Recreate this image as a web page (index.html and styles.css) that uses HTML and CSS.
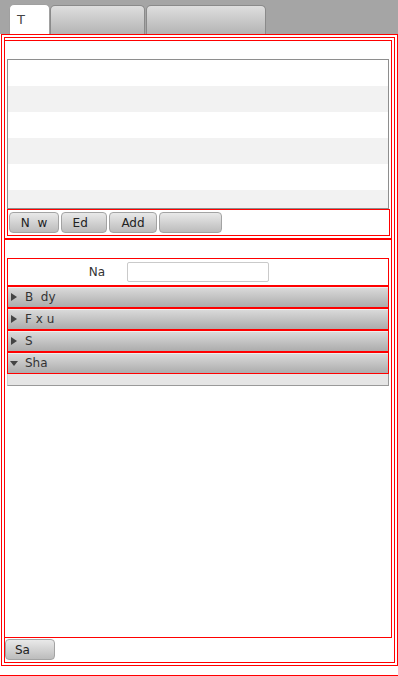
FILE: index.html
```html
<!DOCTYPE html>
<html lang="en">
<head>
  <meta charset="UTF-8">
  <meta name="viewport" content="width=device-width, initial-scale=1.0">
  <title>Editor</title>
  <link rel="stylesheet" href="styles.css">
</head>
<body>
  <div class="tab-bar">
    <div class="tab tab-active">T</div>
    <div class="tab tab-2"></div>
    <div class="tab tab-3"></div>
  </div>

  <div class="frame">
    <div class="frame-inner">
      <div class="split">
        <div class="pane-top">
          <div class="list">
            <div class="row"></div>
            <div class="row"></div>
            <div class="row"></div>
            <div class="row"></div>
            <div class="row"></div>
            <div class="row"></div>
          </div>
          <div class="button-row">
            <button class="btn btn-new">N&nbsp;&nbsp;w</button>
            <button class="btn btn-edit">Ed&nbsp;&nbsp;</button>
            <button class="btn btn-add">Add</button>
            <button class="btn btn-blank"></button>
          </div>
        </div>

        <div class="divider"></div>

        <div class="pane-bottom">
          <div class="name-row">
            <label class="name-label" for="name">Na</label>
            <input class="name-input" id="name" type="text">
          </div>
          <div class="titled"><span class="arrow"></span><span class="titled-text">B&nbsp;&nbsp;dy</span></div>
          <div class="titled"><span class="arrow"></span><span class="titled-text">F x u</span></div>
          <div class="titled"><span class="arrow"></span><span class="titled-text">S</span></div>
          <div class="titled titled-open"><span class="arrow arrow-down"></span><span class="titled-text">Sha</span></div>
          <div class="titled-body"></div>
        </div>
      </div>

      <div class="save-row">
        <button class="btn btn-save">Sa&nbsp;&nbsp;&nbsp;&nbsp;</button>
      </div>
    </div>
  </div>

  <div class="status-line"></div>
</body>
</html>
```

FILE: styles.css
```css
html, body {
  margin: 0;
  padding: 0;
}
body {
  width: 398px;
  background: #fff;
  font-family: "DejaVu Sans", sans-serif;
  font-size: 12px;
  color: #333;
}
* { box-sizing: border-box; }

/* tabs */
.tab-bar {
  height: 34px;
  background: #a5a5a5;
  display: flex;
  align-items: flex-end;
  padding-left: 9px;
}
.tab {
  height: 29px;
  border: 1px solid #8a8a8a;
  border-bottom: none;
  border-radius: 5px 5px 0 0;
  background: linear-gradient(#dedede, #b4b4b4);
}
.tab-active {
  width: 41px;
  height: 30px;
  background: #fff;
  border-color: #a0a0a0;
  padding: 8px 0 0 7px;
  line-height: 14px;
  font-size: 13px;
  color: #444;
}
.tab-2 { width: 95px; }
.tab-3 { width: 120px; margin-left: 1px; }

/* nested frames */
.frame {
  margin-left: 1px;
  width: 397px;
  height: 632px;
  border: 1px solid #f00;
  padding: 2px;
  display: flex;
  flex-direction: column;
}
.frame-inner {
  flex: 1;
  border: 1px solid #f00;
  display: flex;
  flex-direction: column;
}
.split {
  height: 598px;
  margin: 2px 2px 0 0;
  border: 1px solid #f00;
  border-left: none;
  display: flex;
  flex-direction: column;
}

/* top pane */
.pane-top { padding-top: 18px; }
.list {
  margin-left: 2px;
  width: 382px;
  height: 150px;
  border: 1px solid #8e8e8e;
  overflow: hidden;
}
.row { height: 26px; background: #fff; }
.row:nth-child(even) { background: #f2f2f2; }
.button-row {
  margin-left: 2px;
  width: 383px;
  height: 27px;
  border: 1px solid #f00;
  display: flex;
  align-items: center;
  gap: 2px;
  padding-left: 1px;
}
.btn {
  height: 21px;
  padding: 0;
  border: 1px solid #a3a3a3;
  border-radius: 4px;
  background: linear-gradient(#e9e9e9, #bcbcbc);
  font-family: "DejaVu Sans", sans-serif;
  font-size: 12px;
  color: #222;
  white-space: pre;
}
.btn-new { width: 50px; }
.btn-edit { width: 46px; }
.btn-add { width: 48px; }
.btn-blank { width: 63px; }

.divider {
  margin-top: 2px;
  height: 2px;
  background: #f00;
}

/* bottom pane */
.pane-bottom { padding-top: 18px; }
.name-row {
  margin-left: 2px;
  width: 382px;
  height: 28px;
  border: 1px solid #f00;
  display: flex;
  align-items: center;
}
.name-label {
  width: 97px;
  text-align: right;
  color: #333;
}
.name-input {
  margin-left: 22px;
  width: 142px;
  height: 20px;
  padding: 0;
  border: 1px solid #cacaca;
  border-radius: 2px;
  background: #fff;
}
.titled {
  margin-left: 2px;
  width: 382px;
  height: 22px;
  border: 1px solid #f00;
  background: linear-gradient(#dcdcdc, #acacac);
  box-shadow: inset 0 1px 0 #ededed;
  display: flex;
  align-items: center;
  color: #333;
}
.arrow {
  margin-left: 3px;
  width: 0;
  height: 0;
  border-left: 6px solid #444;
  border-top: 4px solid transparent;
  border-bottom: 4px solid transparent;
}
.arrow-down {
  margin-left: 2px;
  border-left: 4px solid transparent;
  border-right: 4px solid transparent;
  border-top: 5px solid #444;
  border-bottom: none;
}
.titled-text {
  margin-left: 8px;
  white-space: pre;
}
.titled-open .titled-text { margin-left: 7px; }
.titled-body {
  margin-left: 2px;
  width: 382px;
  height: 12px;
  background: #e5e5e5;
  border-left: 1px solid #cfcfcf;
  border-right: 1px solid #999;
  border-bottom: 1px solid #999;
}

.save-row { padding-top: 1px; }
.btn-save { width: 50px; }

.status-line {
  margin-top: 9px;
  height: 1px;
  border-top: 1px solid #f00;
}
```
